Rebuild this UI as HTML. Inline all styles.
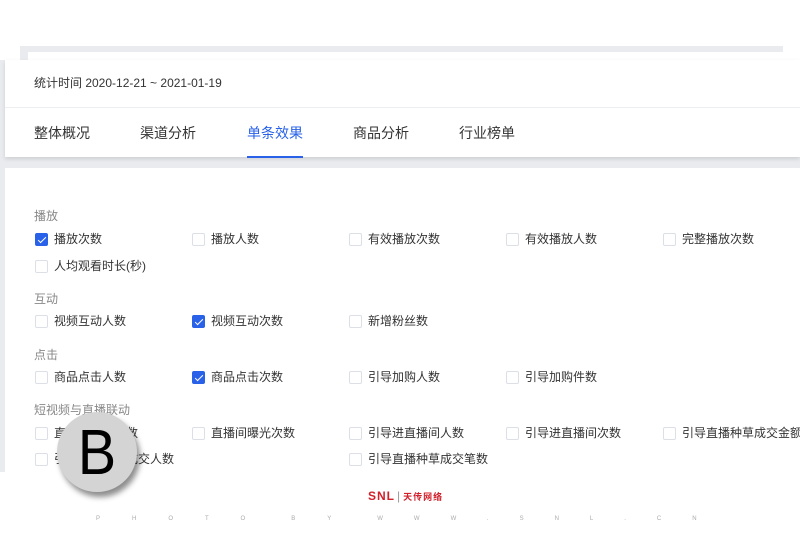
<!DOCTYPE html>
<html><head><meta charset="utf-8"><style>
*{margin:0;padding:0;box-sizing:border-box}
body{width:800px;height:533px;background:#fff;position:relative;overflow:hidden;font-family:"Liberation Sans","Noto Sans CJK SC",sans-serif;color:#333}
.abs{position:absolute}
.cb{position:absolute;width:13px;height:13px;border:1px solid #dcdfe6;border-radius:2px;background:#fff}
.cb.on{background:#2962e8;border-color:#2962e8}
.cb.on:after{content:"";position:absolute;left:3.5px;top:1px;width:3px;height:7px;border:solid #fff;border-width:0 1.5px 1.5px 0;transform:rotate(45deg)}
.lb{position:absolute;font-size:12px;color:#333;line-height:14px;white-space:nowrap}
.hd{position:absolute;font-size:12px;color:#888;line-height:14px}
</style></head><body>
<div class="abs" style="left:0;top:60px;width:800px;height:412px;background:#e9ebef"></div>
<div class="abs" style="left:20px;top:46px;width:763px;height:14px;background:#e9ebef"></div>
<div class="abs" style="left:28px;top:52px;width:772px;height:10px;background:#fff"></div>
<div class="abs" style="left:5px;top:60px;width:795px;height:97px;background:#fff;box-shadow:0 2px 4px rgba(0,0,0,.12)"></div>
<div class="abs" style="left:5px;top:107px;width:795px;height:1px;background:#eceef1"></div>
<div class="abs" style="left:34px;top:76px;font-size:12px;line-height:14px;color:#333">统计时间 2020-12-21 ~ 2021-01-19</div>
<div class="abs" style="left:34px;top:124px;font-size:14px;line-height:18px;color:#333">整体概况</div>
<div class="abs" style="left:140px;top:124px;font-size:14px;line-height:18px;color:#333">渠道分析</div>
<div class="abs" style="left:247px;top:124px;font-size:14px;line-height:18px;color:#2962e8">单条效果</div>
<div class="abs" style="left:247px;top:156px;width:56px;height:2px;background:#2962e8"></div>
<div class="abs" style="left:353px;top:124px;font-size:14px;line-height:18px;color:#333">商品分析</div>
<div class="abs" style="left:459px;top:124px;font-size:14px;line-height:18px;color:#333">行业榜单</div>
<div class="abs" style="left:5px;top:168px;width:795px;height:304px;background:#fff"></div>

<div class="hd" style="left:34px;top:209px">播放</div>
<div class="cb on" style="left:35px;top:233px"></div><div class="lb" style="left:54px;top:232px">播放次数</div>
<div class="cb" style="left:192px;top:233px"></div><div class="lb" style="left:211px;top:232px">播放人数</div>
<div class="cb" style="left:349px;top:233px"></div><div class="lb" style="left:368px;top:232px">有效播放次数</div>
<div class="cb" style="left:506px;top:233px"></div><div class="lb" style="left:525px;top:232px">有效播放人数</div>
<div class="cb" style="left:663px;top:233px"></div><div class="lb" style="left:682px;top:232px">完整播放次数</div>
<div class="cb" style="left:35px;top:260px"></div><div class="lb" style="left:54px;top:259px">人均观看时长(秒)</div>

<div class="hd" style="left:34px;top:292px">互动</div>
<div class="cb" style="left:35px;top:315px"></div><div class="lb" style="left:54px;top:314px">视频互动人数</div>
<div class="cb on" style="left:192px;top:315px"></div><div class="lb" style="left:211px;top:314px">视频互动次数</div>
<div class="cb" style="left:349px;top:315px"></div><div class="lb" style="left:368px;top:314px">新增粉丝数</div>

<div class="hd" style="left:34px;top:348px">点击</div>
<div class="cb" style="left:35px;top:371px"></div><div class="lb" style="left:54px;top:370px">商品点击人数</div>
<div class="cb on" style="left:192px;top:371px"></div><div class="lb" style="left:211px;top:370px">商品点击次数</div>
<div class="cb" style="left:349px;top:371px"></div><div class="lb" style="left:368px;top:370px">引导加购人数</div>
<div class="cb" style="left:506px;top:371px"></div><div class="lb" style="left:525px;top:370px">引导加购件数</div>

<div class="hd" style="left:34px;top:403px">短视频与直播联动</div>
<div class="cb" style="left:35px;top:427px"></div><div class="lb" style="left:54px;top:426px">直播间曝光人数</div>
<div class="cb" style="left:192px;top:427px"></div><div class="lb" style="left:211px;top:426px">直播间曝光次数</div>
<div class="cb" style="left:349px;top:427px"></div><div class="lb" style="left:368px;top:426px">引导进直播间人数</div>
<div class="cb" style="left:506px;top:427px"></div><div class="lb" style="left:525px;top:426px">引导进直播间次数</div>
<div class="cb" style="left:663px;top:427px"></div><div class="lb" style="left:682px;top:426px">引导直播种草成交金额</div>
<div class="cb" style="left:35px;top:453px"></div><div class="lb" style="left:54px;top:452px">引导直播种草成交人数</div>
<div class="cb" style="left:349px;top:453px"></div><div class="lb" style="left:368px;top:452px">引导直播种草成交笔数</div>

<div class="abs" style="left:57px;top:412px;width:80px;height:80px;border-radius:50%;background:#d4d4d4;box-shadow:3px 5px 6px rgba(0,0,0,.45)"></div>
<div class="abs" style="left:57px;top:412px;width:80px;height:80px;text-align:center;font-size:64px;line-height:80px;color:#000;font-family:'Liberation Sans',sans-serif;transform:scaleX(0.9)">B</div>

<div class="abs" style="left:368px;top:490px;font-size:12px;line-height:12px;font-weight:bold;color:#d0202a;letter-spacing:1px">SNL<span style="color:#999;font-weight:normal;margin:0 2px">|</span><span style="font-size:9px">天传网络</span></div>
<div class="abs" style="left:96px;top:515px;font-size:6px;line-height:8px;color:#aaa;white-space:nowrap">
<span style="letter-spacing:32px">PHOTO</span><span style="margin-left:14px;letter-spacing:32px">BY</span><span style="margin-left:14px;letter-spacing:31px">WWW.SNL.CN</span></div>
</body></html>
